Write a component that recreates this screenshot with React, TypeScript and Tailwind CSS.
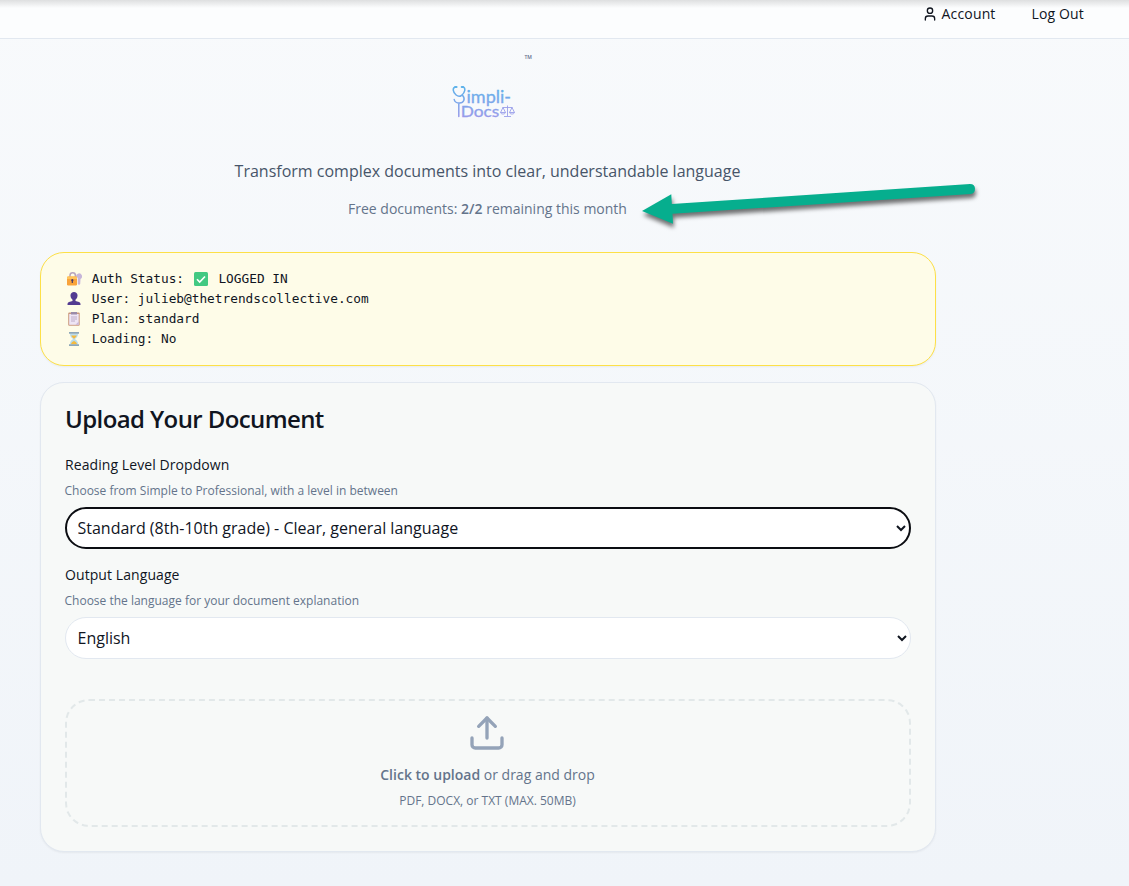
import React from "react";
import { User, Upload } from "lucide-react";

function Logo() {
  return (
    <svg className="block h-[80px] w-[96px]" viewBox="440 49 96 80" fill="none">
      <defs>
        <linearGradient id="brand" gradientUnits="userSpaceOnUse" x1="0" y1="86" x2="0" y2="118">
          <stop offset="0" stopColor="#5cb3ea" />
          <stop offset="1" stopColor="#9a9aea" />
        </linearGradient>
      </defs>
      <text x="524.5" y="59" fontSize="5" fontWeight="600" fill="#64688c" className="font-['Open_Sans',sans-serif]">TM</text>
      <g stroke="url(#brand)" strokeWidth="1.5" strokeLinecap="round" strokeLinejoin="round">
        <path d="M455.500 87c-3.400.6-2.800 5.200.6 8 1.800 1.500 3.800 1.700 5.500.3 3.600-2.800 4.400-7.600 1.400-8.300" />
        <path d="M455.300 87h1.200M461.800 87h1.200" strokeWidth="2.200" />
        <path d="M462.500 95.300c3.200 3.700 1.200 7.600-2.800 7.700-3.200 0-5.200-1.500-5.500-3.500M458.800 103.500v13" />
      </g>
      <g fill="url(#brand)" stroke="url(#brand)" strokeWidth="0.3" className="font-['Lato',sans-serif]">
        <text x="466.500" y="102.500" fontSize="17" textLength="44.500" lengthAdjust="spacingAndGlyphs">impli-</text>
        <text x="460.800" y="116.800" fontSize="15.500" textLength="38.500" lengthAdjust="spacingAndGlyphs">Docs</text>
      </g>
      <g stroke="#9a9fea" strokeWidth="0.9">
        <path d="M507.500 105.500v10.500M504 116.500h7M502.500 107.500h10M503 107.500l-2.500 5h5zM512 107.500l-2.500 5h5zM500.500 112.500c.5 2 4.500 2 5 0M509.500 112.500c.5 2 4.500 2 5 0" />
      </g>
    </svg>
  );
}

function Lock() {
  return (
    <svg className="size-[16px]" viewBox="0 0 16 16">
      <path d="M10 5.500a3 3 0 1 1 4.500 2.500l-.3 5-1.200 1-1.200-1V7z" fill="#c6b5d9" />
      <path d="M4 6V4.500a2.700 2.700 0 0 1 5.400 0V6" fill="none" stroke="#b7a4bd" strokeWidth="1.500" />
      <rect x="1" y="5.500" width="10" height="9" rx="1.200" fill="#f9a33b" />
      <path d="M1 6.500q0-1 1-1h8q1 0 1 1V8H1z" fill="#ffc35b" />
      <path d="M6.300 8a1.200 1.200 0 0 1 .6 2.200V12H5.700v-1.800A1.200 1.200 0 0 1 6.300 8z" fill="#433b6b" />
    </svg>
  );
}
function Person() {
  return (
    <svg className="size-[16px]" viewBox="0 0 16 16" fill="#533b91">
      <path d="M4.500 4.500C4.500 2.300 6 1 8 1s3.500 1.300 3.500 3.500S10.300 9 8 9 4.500 6.700 4.500 4.500z" />
      <path d="M6.500 8h3v2l3.500 1c1.200.4 1.500 1.200 1.500 3h-13c0-1.800.3-2.600 1.500-3l3.500-1z" />
    </svg>
  );
}
function Clipboard() {
  return (
    <svg className="size-[16px]" viewBox="0 0 16 16">
      <rect x="2.200" y="1.500" width="11.500" height="13.300" rx="1" fill="#cb997f" />
      <rect x="3.200" y="3" width="9.500" height="10.800" fill="#eee5f5" />
      <path d="M5 1h6v2.500H5z" fill="#9a8ba8" />
      <path d="M5 6h6M5 8h6M5 10h4" stroke="#b09fbd" strokeWidth="0.800" />
      <path d="M9.500 13.800l3.200-3.200v3.200z" fill="#c9b5d6" />
    </svg>
  );
}
function Hourglass() {
  return (
    <svg className="size-[16px]" viewBox="0 0 16 16">
      <path d="M4 2.500h8c0 3-1 4-3.200 5.500C11 9.500 12 10.500 12 13.500H4c0-3 1-4 3.200-5.500C5 6.500 4 5.500 4 2.500z" fill="#b9dceb" />
      <path d="M5.300 4.500h5.400c-.4 1.500-1.500 2.400-2.700 3.200-1.200-.8-2.300-1.700-2.700-3.200zM5 13.300c.3-2 1.500-2.500 3-3.300 1.500.8 2.700 1.300 3 3.300z" fill="#f5b93c" />
      <path d="M3 1h10v1.700H3zM3 13.300h10V15H3z" fill="#8da7b8" />
    </svg>
  );
}
function Check() {
  return (
    <svg className="size-[16px]" viewBox="0 0 16 16">
      <rect x="1" y="1" width="14" height="14" rx="1.500" fill="#42c982" />
      <path d="M4 8.200l2.700 2.800L12 5.500" fill="none" stroke="#fff" strokeWidth="1.600" />
    </svg>
  );
}

function StatusRow({ icon, children }: { icon: React.ReactNode; children: React.ReactNode }) {
  return (
    <div className="flex h-5 items-center">
      <span className="mr-[9.700px] ml-px">{icon}</span>
      {children}
    </div>
  );
}

interface FieldProps {
  label: string;
  hint: string;
  value: string;
  active?: boolean;
}
function Field({ label, hint, value, active }: FieldProps) {
  return (
    <div className="flex flex-col">
      <label className="-ml-px h-5 pl-px text-sm leading-5 tracking-[0.08px] text-[#10151f]">{label}</label>
      <p className="mt-2 mb-2 -ml-px h-4 pl-[0.500px] text-xs leading-4 text-[#64748b]">{hint}</p>
      <select
        className={
          active
            ? "h-[42px] w-full rounded-[21px] border-2 border-[#0b0d12] bg-white pr-[6px] pl-[6.500px] text-base text-[#10151f] outline-none"
            : "h-[42px] w-full rounded-[21px] border border-[#e2e8f0] bg-white pr-2 pl-[7.500px] text-base text-[#10151f] outline-none"
        }
      >
        <option>{value}</option>
      </select>
    </div>
  );
}

export default function App() {
  return (
    <div className="relative h-[886px] w-full overflow-hidden bg-linear-to-b from-[#f8fafc] to-[#f0f4f9] font-['Open_Sans','Noto_Sans',sans-serif]">
      <header className="flex h-[39px] items-start justify-end border-b border-[#e2e8f0] bg-[#fcfdfe] bg-linear-to-b from-[#dedfe0] to-[#fcfdfe] to-[8px] pt-1 pr-[45px] text-sm leading-5 text-[#10151f]">
        <a className="mr-9 flex items-center gap-1 tracking-[0.150px]">
          <User size={16} strokeWidth={2} />
          Account
        </a>
        <a className="tracking-[0.150px]">Log Out</a>
      </header>

      <main className="ml-10 w-[896px]">
        <div className="flex flex-col items-center pt-[10px] pr-px">
          <Logo />
          <p className="mt-[30px] h-6 text-base leading-6 text-[#475569]">
            Transform complex documents into clear, understandable language
          </p>
          <p className="mt-4 h-5 text-sm leading-5 text-[#64748b]">
            Free documents: <span className="font-semibold">2/2</span> remaining this month
          </p>
        </div>

        <section className="mt-[33px] h-[114px] rounded-3xl border border-[#fde047] bg-[#fefce8] px-6 py-4 font-['DejaVu_Sans_Mono',monospace] text-[12.790px] whitespace-pre text-[#10151f] shadow-xs">
          <StatusRow icon={<Lock />}>
            Auth Status: <span className="mr-[2px] ml-px"><Check /></span> LOGGED IN
          </StatusRow>
          <StatusRow icon={<Person />}>User: julieb@thetrendscollective.com</StatusRow>
          <StatusRow icon={<Clipboard />}>Plan: standard</StatusRow>
          <StatusRow icon={<Hourglass />}>Loading: No</StatusRow>
        </section>

        <section className="mt-4 h-[470px] rounded-3xl border border-[#e2e8f0] bg-[#f7f9f8] px-6 pt-5 shadow-xs">
          <h2 className="h-8 text-2xl leading-8 font-semibold tracking-[-0.600px] text-[#10151f]">Upload Your Document</h2>
          <div className="mt-5 flex flex-col gap-4">
            <Field
              label="Reading Level Dropdown"
              hint="Choose from Simple to Professional, with a level in between"
              value="Standard (8th-10th grade) - Clear, general language"
              active
            />
            <Field label="Output Language" hint="Choose the language for your document explanation" value="English" />
          </div>
          <div className="mt-10 flex h-32 flex-col items-center rounded-3xl border-2 border-dashed border-[#e2e8e9] pt-3 pr-px text-[#64748b]">
            <Upload size={40} strokeWidth={2} className="mr-px text-[#94a3b8]" />
            <p className="mt-3 text-sm leading-5">
              <span className="font-semibold">Click to upload</span> or drag and drop
            </p>
            <p className="mt-2 text-xs leading-4">PDF, DOCX, or TXT (MAX. 50MB)</p>
          </div>
        </section>
      </main>

      <svg className="absolute top-[175px] left-[635px] h-[60px] w-[350px] drop-shadow-[1px_4px_2px_rgba(0,0,0,0.55)]" viewBox="635 175 350 60">
        <path d="M642 211L671.300 194.300L671.800 204L970 184Q975 184 975 188.800Q975 193.500 970.500 194L672.500 213.800L673 223.700Z" fill="#06ae8e" />
      </svg>
    </div>
  );
}
